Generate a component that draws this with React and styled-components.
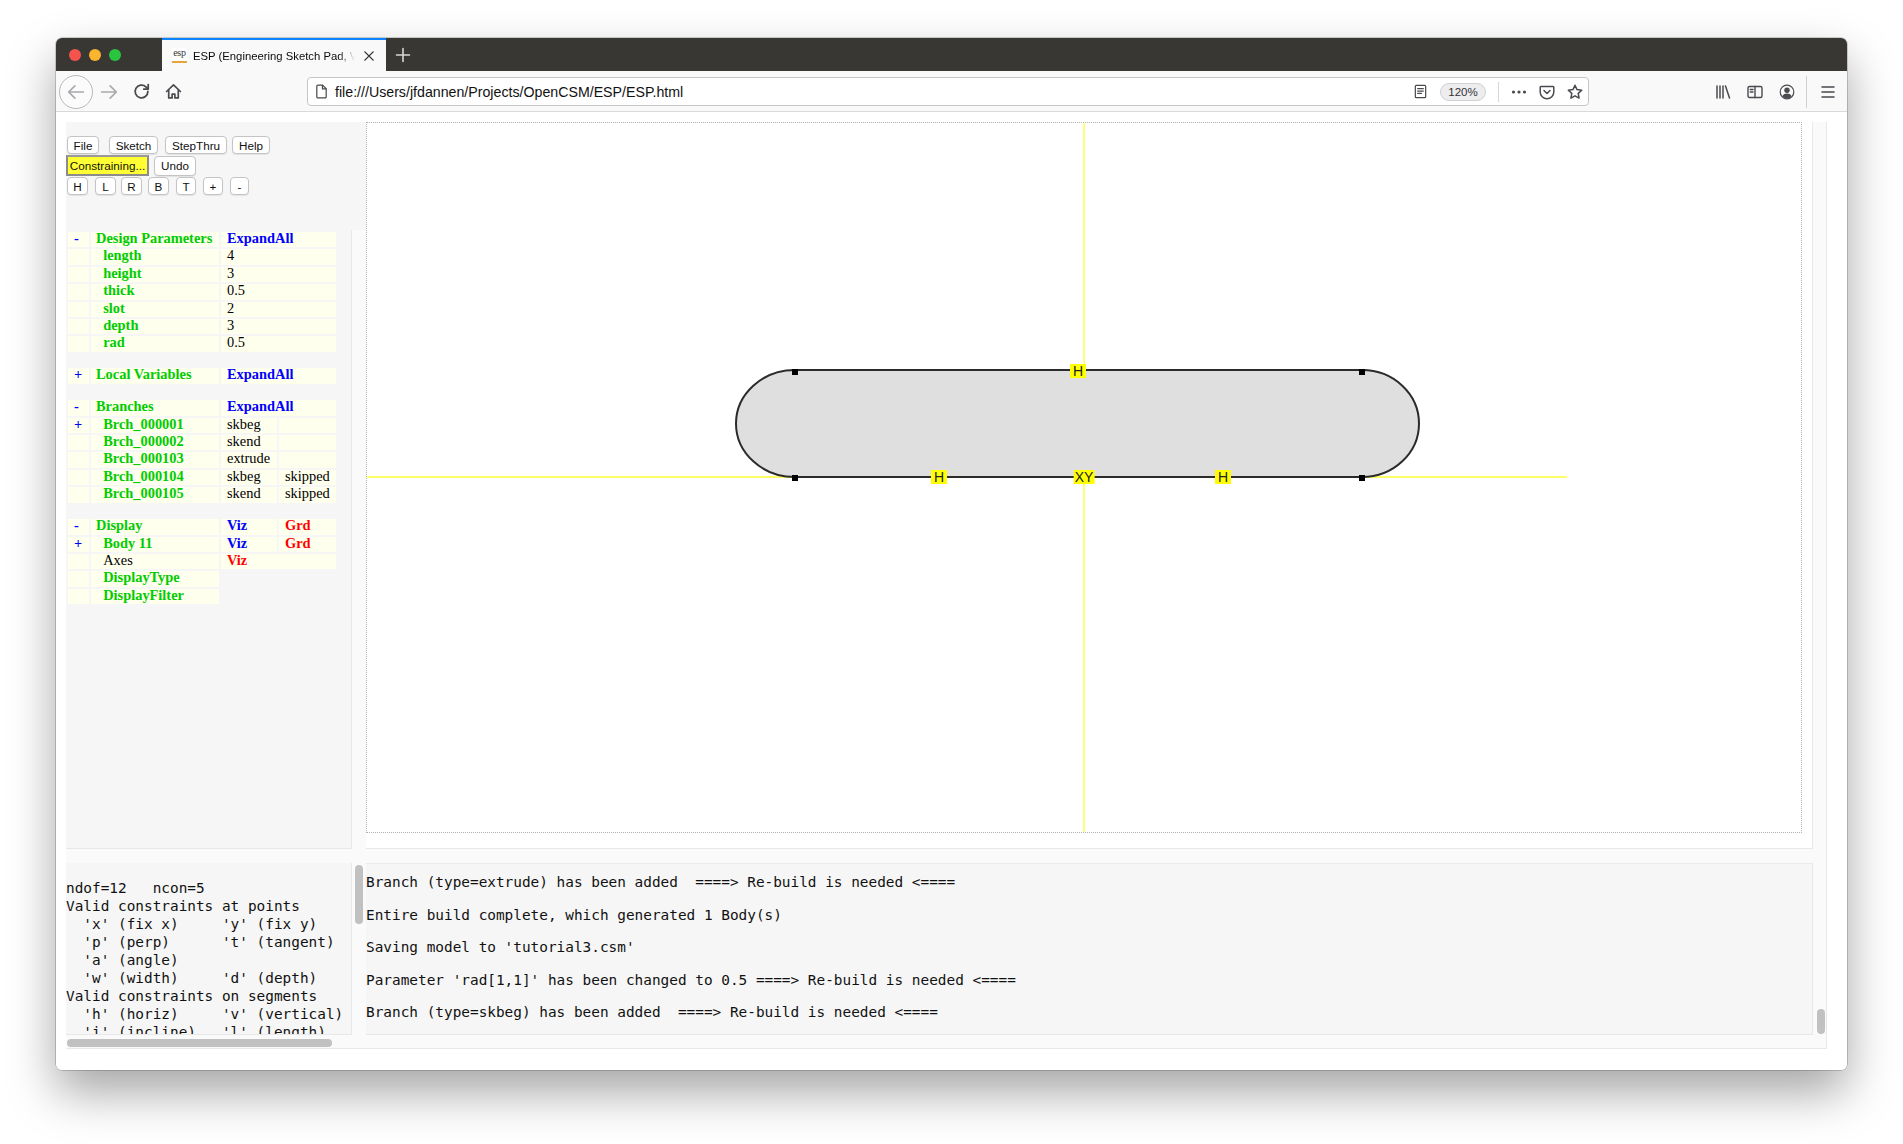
import React from "react";
import styled, { createGlobalStyle } from "styled-components";

const GlobalStyle = createGlobalStyle`
  html, body {
    margin: 0;
    padding: 0;
    background: #ffffff;
  }
  * {
    box-sizing: border-box;
  }
`;

const Page = styled.div`
  width: 1903px;
  height: 1144px;
  padding: 38px 56px 74px;
  overflow: hidden;
  font-family: "Liberation Sans", Arial, sans-serif;
`;

const Window = styled.div`
  width: 1791px;
  height: 1032px;
  background: #ffffff;
  border-radius: 6px;
  overflow: hidden;
  box-shadow: 0 0 0 0.5px rgba(0, 0, 0, 0.35), 0 22px 48px rgba(0, 0, 0, 0.36);
  display: flex;
  flex-direction: column;
`;

const TitleBar = styled.div`
  height: 33px;
  background: #383734;
  display: flex;
  align-items: stretch;
  padding-left: 13px;
`;

const Lights = styled.div`
  display: flex;
  align-items: center;
  gap: 8px;
  margin-right: 41px;
`;

const Light = styled.span`
  width: 12px;
  height: 12px;
  border-radius: 50%;
  background: ${(p) => p.$color};
`;

const Tab = styled.div`
  width: 224px;
  background: #f9f9fa;
  border-top: 2px solid #0a84ff;
  display: flex;
  align-items: center;
  padding-left: 10px;
  color: #0c0c0d;
  font-size: 11.3px;
`;

const Favicon = styled.span`
  width: 15px;
  height: 15px;
  flex: none;
  font-size: 10px;
  line-height: 10px;
  letter-spacing: -0.2px;
  color: #333333;
  border-bottom: 2px solid #e8a33a;
  background: #ffffff;
  text-align: center;
  font-family: "Liberation Serif", serif;
`;

const TabTitle = styled.span`
  width: 162px;
  margin-left: 6px;
  white-space: nowrap;
  -webkit-mask-image: linear-gradient(to right, #000 90%, transparent);
  mask-image: linear-gradient(to right, #000 90%, transparent);
`;

const TabClose = styled.span`
  display: flex;
  margin-left: 8px;
  color: #333333;
`;

const NewTab = styled.span`
  display: flex;
  align-items: center;
  margin-left: 9px;
  color: #d7d7d7;
`;

const Toolbar = styled.div`
  height: 41px;
  background: #f9f9fa;
  border-bottom: 1px solid #d9d9dc;
  display: flex;
  align-items: center;
  padding: 1px 0 0 3px;
  color: #4a4a4f;
`;

const BackButton = styled.span`
  width: 34px;
  height: 34px;
  border-radius: 50%;
  border: 1px solid #b9b9bb;
  background: #fbfbfc;
  display: flex;
  align-items: center;
  justify-content: center;
  color: #a9a9ad;
`;

const ToolSlot = styled.span`
  width: 32px;
  height: 32px;
  flex: none;
  margin-left: ${(p) => p.$left || 0}px;
  display: flex;
  align-items: center;
  justify-content: center;
  color: ${(p) => p.$color || "#4a4a4f"};
`;

const UrlBar = styled.div`
  width: 1282px;
  height: 29px;
  margin-left: 118px;
  background: #ffffff;
  border: 1px solid #c6c6c8;
  border-radius: 4px;
  display: flex;
  align-items: center;
  padding: 0 5px 0 5px;
`;

const UrlText = styled.span`
  flex: 1;
  margin-left: 6px;
  font-size: 14.2px;
  color: #111111;
  white-space: nowrap;
`;

const UrlIcon = styled.span`
  width: 16px;
  height: 16px;
  flex: none;
  display: flex;
  align-items: center;
  justify-content: center;
  margin-left: ${(p) => p.$gap || 0}px;
`;

const ZoomPill = styled.span`
  width: 46px;
  height: 18px;
  margin-left: 12px;
  border: 1px solid #d0d0d2;
  border-radius: 9px;
  background: #ededf0;
  font-size: 11.5px;
  line-height: 16px;
  text-align: center;
  color: #333333;
`;

const UrlDivider = styled.span`
  width: 1px;
  height: 20px;
  margin-left: 12px;
  background: #d7d7db;
`;

const ToolDivider = styled.span`
  width: 1px;
  height: 32px;
  margin-left: 3px;
  background: #d0d0d3;
`;

const Workspace = styled.div`
  flex: 1;
  padding: 10px 20px 21px 10px;
  background: #ffffff;
`;

const PanelGrid = styled.div`
  height: 100%;
  display: grid;
  grid-template-columns: 300px 1447px 13px;
  grid-template-rows: 727px 14px 172px 13px;
  background: #fafafa;
  border-right: 1px solid #e8e8e8;
  border-bottom: 1px solid #e8e8e8;
`;

const LeftColumn = styled.div`
  grid-column: 1;
  grid-row: 1;
  display: flex;
  flex-direction: column;
`;

const ButtonBar = styled.div`
  height: 108px;
  flex: none;
  background: #f6f6f6;
  padding-top: 14px;
`;

const ButtonRow = styled.div`
  display: flex;
  align-items: center;
  height: ${(p) => p.$height}px;
`;

const MenuButton = styled.button`
  height: ${(p) => p.$height || 18}px;
  width: ${(p) => p.$width}px;
  margin-left: ${(p) => p.$left}px;
  padding: 0;
  font-family: "Liberation Sans", Arial, sans-serif;
  font-size: 11.7px;
  color: #111111;
  background: #ffffff;
  border: 1px solid #c4c4c4;
  border-radius: 4px;
  box-shadow: 0 1px 1px rgba(0, 0, 0, 0.08);
`;

const ActiveButton = styled.button`
  width: 83px;
  height: 21px;
  padding: 0;
  font-family: "Liberation Sans", Arial, sans-serif;
  font-size: 11.7px;
  color: #111111;
  background: #ffff33;
  border: 2px solid #8c8c8c;
  border-top-color: #9a9a9a;
`;

const TreePanel = styled.div`
  flex: 1;
  width: 286px;
  background: #f6f6f6;
  border-right: 1px solid #e8e8e8;
  border-bottom: 1px solid #e8e8e8;
`;

const TreeTable = styled.table`
  table-layout: fixed;
  width: 272px;
  border-collapse: separate;
  border-spacing: 2px;
  font-family: "Liberation Serif", "Times New Roman", serif;
  font-size: 14.4px;
  line-height: 13.4px;
`;

const Cell = styled.td`
  height: 15.4px;
  padding: 0 0 0 ${(p) => p.$pad ?? 6}px;
  vertical-align: top;
  background: #ffffee;
  color: ${(p) => p.$color || "#000000"};
  font-weight: ${(p) => (p.$color ? "bold" : "normal")};
  white-space: pre;
`;

const SpacerCell = styled.td`
  height: 12.6px;
  padding: 0;
`;

const CanvasPanel = styled.div`
  grid-column: 2;
  grid-row: 1;
  background: #ffffff;
  border-right: 1px solid #e8e8e8;
  border-bottom: 1px solid #e8e8e8;
`;

const CanvasFrame = styled.div`
  position: relative;
  width: 1436px;
  height: 711px;
  border: 1px dotted #b0b0b0;
`;

const Badge = styled.span`
  position: absolute;
  left: ${(p) => p.$x}px;
  top: ${(p) => p.$y}px;
  transform: translate(-50%, -50%);
  height: 14px;
  min-width: 16px;
  padding: 0 1px;
  background: #ffff00;
  color: #222222;
  font-size: 14px;
  line-height: 14px;
  text-align: center;
`;

const CanvasDrawing = styled.svg`
  display: block;
`;

const InfoPanel = styled.pre`
  grid-column: 1;
  grid-row: 3;
  position: relative;
  width: 286px;
  margin: 0;
  padding: 16px 0 0 0;
  background: #f6f6f6;
  border-right: 1px solid #e8e8e8;
  border-bottom: 1px solid #e8e8e8;
  overflow: hidden;
  font-family: "DejaVu Sans Mono", monospace;
  font-size: 14.4px;
  line-height: 18px;
  color: #111111;
`;

const MessagePanel = styled.div`
  grid-column: 2;
  grid-row: 3;
  background: #f6f6f6;
  border-right: 1px solid #e8e8e8;
  border-bottom: 1px solid #e8e8e8;
  border-top: 1px solid #ececec;
  padding-top: 9px;
  font-family: "DejaVu Sans Mono", monospace;
  font-size: 14.4px;
  line-height: 18px;
  color: #111111;
`;

const MessageLine = styled.p`
  margin: 0 0 14.5px;
  white-space: pre;
`;

const GutterCell = styled.div`
  grid-column: ${(p) => p.$column};
  grid-row: ${(p) => p.$row};
  position: relative;
`;

const Thumb = styled.span`
  position: absolute;
  left: ${(p) => p.$left}px;
  top: ${(p) => p.$top}px;
  width: ${(p) => p.$width}px;
  height: ${(p) => p.$height}px;
  background: #c1c1c1;
  border-radius: 5px;
`;

const params = [
  ["length", "4"],
  ["height", "3"],
  ["thick", "0.5"],
  ["slot", "2"],
  ["depth", "3"],
  ["rad", "0.5"],
];

const branches = [
  ["+", "Brch_000001", "skbeg", ""],
  ["", "Brch_000002", "skend", ""],
  ["", "Brch_000103", "extrude", ""],
  ["", "Brch_000104", "skbeg", "skipped"],
  ["", "Brch_000105", "skend", "skipped"],
];

const GREEN = "#00cc00";
const BLUE = "#0000ff";
const RED = "#ff0000";

const infoText = `ndof=12   ncon=5
Valid constraints at points
  'x' (fix x)     'y' (fix y)
  'p' (perp)      't' (tangent)
  'a' (angle)
  'w' (width)     'd' (depth)
Valid constraints on segments
  'h' (horiz)     'v' (vertical)
  'i' (incline)   'l' (length)`;

const messages = [
  "Branch (type=extrude) has been added  ====> Re-build is needed <====",
  "Entire build complete, which generated 1 Body(s)",
  "Saving model to 'tutorial3.csm'",
  "Parameter 'rad[1,1]' has been changed to 0.5 ====> Re-build is needed <====",
  "Branch (type=skbeg) has been added  ====> Re-build is needed <====",
];

const Icon = ({ size = 16, width = 1.6, children }) => (
  <svg
    width={size}
    height={size}
    viewBox="0 0 16 16"
    fill="none"
    stroke="currentColor"
    strokeWidth={width}
    strokeLinecap="round"
    strokeLinejoin="round"
  >
    {children}
  </svg>
);

const Sign = ({ children }) => (
  <Cell $pad={6} $color={BLUE}>
    {children}
  </Cell>
);

const SpacerRow = () => (
  <tr>
    <SpacerCell colSpan={4} />
  </tr>
);

const App = () => {
  return (
    <Page>
      <GlobalStyle />
      <Window>
        <TitleBar>
          <Lights>
            <Light $color="#f5544d" />
            <Light $color="#fab42d" />
            <Light $color="#29c53f" />
          </Lights>
          <Tab>
            <Favicon>esp</Favicon>
            <TabTitle>ESP (Engineering Sketch Pad, V</TabTitle>
            <TabClose>
              <Icon size={12} width={1.8}>
                <path d="M2.5 2.5l11 11M13.5 2.5l-11 11" />
              </Icon>
            </TabClose>
          </Tab>
          <NewTab>
            <Icon size={16} width={1.6}>
              <path d="M8 1.5v13M1.5 8h13" />
            </Icon>
          </NewTab>
        </TitleBar>

        <Toolbar>
          <BackButton>
            <Icon size={18} width={1.5}>
              <path d="M14.5 8h-13M7 2.5L1.5 8 7 13.5" />
            </Icon>
          </BackButton>
          <ToolSlot $color="#a9a9ad">
            <Icon size={18} width={1.5}>
              <path d="M1.5 8h13M9 2.5L14.5 8 9 13.5" />
            </Icon>
          </ToolSlot>
          <ToolSlot>
            <Icon size={17} width={1.7}>
              <path d="M14 8a6 6 0 1 1-1.9-4.4L14 5.5" />
              <path d="M14.3 1.5v4.2h-4.2" />
            </Icon>
          </ToolSlot>
          <ToolSlot>
            <Icon size={17} width={1.6}>
              <path d="M1.5 8L8 1.8 14.5 8" />
              <path d="M3.5 7v7h3.2v-3.6h2.6V14h3.2V7" />
            </Icon>
          </ToolSlot>

          <UrlBar>
            <UrlIcon>
              <Icon size={15} width={1.3}>
                <path d="M3 2.5a1.2 1.2 0 0 1 1.2-1.2h5L13 5v8.5a1.2 1.2 0 0 1-1.2 1.2H4.2A1.2 1.2 0 0 1 3 13.5z" />
                <path d="M9 1.5V5.2h4" />
              </Icon>
            </UrlIcon>
            <UrlText>file:///Users/jfdannen/Projects/OpenCSM/ESP/ESP.html</UrlText>
            <UrlIcon>
              <Icon size={15} width={1.3}>
                <rect x="2.5" y="1.5" width="11" height="13" rx="1" />
                <path d="M5 5h6M5 7.5h6M5 10h4" />
              </Icon>
            </UrlIcon>
            <ZoomPill>120%</ZoomPill>
            <UrlDivider />
            <UrlIcon $gap={12}>
              <svg width="16" height="16" viewBox="0 0 16 16" fill="currentColor">
                <circle cx="2.5" cy="8" r="1.6" />
                <circle cx="8" cy="8" r="1.6" />
                <circle cx="13.5" cy="8" r="1.6" />
              </svg>
            </UrlIcon>
            <UrlIcon $gap={12}>
              <Icon size={16} width={1.5}>
                <path d="M2 2.5h12a.8.8 0 0 1 .8.8V8A6.8 6.8 0 0 1 1.2 8V3.3a.8.8 0 0 1 .8-.8z" />
                <path d="M5 6.5l3 3 3-3" />
              </Icon>
            </UrlIcon>
            <UrlIcon $gap={12}>
              <Icon size={16} width={1.5}>
                <path d="M8 1.3l2 4.3 4.7.6-3.5 3.2.9 4.7L8 11.8l-4.1 2.3.9-4.7L1.3 6.2 6 5.6z" />
              </Icon>
            </UrlIcon>
          </UrlBar>

          <ToolSlot $left={118}>
            <Icon size={16} width={1.5}>
              <path d="M2 2v12M5 2v12M8 2v12M10.5 2l4 12" />
            </Icon>
          </ToolSlot>
          <ToolSlot>
            <Icon size={16} width={1.4}>
              <rect x="1" y="2.5" width="14" height="11" rx="1.5" />
              <path d="M8 2.5v11M3.2 5.5H6M3.2 8H6" />
            </Icon>
          </ToolSlot>
          <ToolSlot>
            <svg width="16" height="16" viewBox="0 0 16 16" fill="none">
              <circle cx="8" cy="8" r="6.8" stroke="currentColor" strokeWidth="1.2" />
              <circle cx="8" cy="6.2" r="2.7" fill="currentColor" />
              <path d="M3.3 12.2c1-2 2.8-2.7 4.7-2.7s3.7.7 4.7 2.7A6 6 0 0 1 8 14.2a6 6 0 0 1-4.7-2z" fill="currentColor" />
            </svg>
          </ToolSlot>
          <ToolDivider />
          <ToolSlot $left={5}>
            <Icon size={16} width={1.6}>
              <path d="M2 3h12M2 8h12M2 13h12" />
            </Icon>
          </ToolSlot>
        </Toolbar>

        <Workspace>
          <PanelGrid>
            <LeftColumn>
              <ButtonBar>
                <ButtonRow $height={18}>
                  <MenuButton $left={1} $width={32}>File</MenuButton>
                  <MenuButton $left={10} $width={49}>Sketch</MenuButton>
                  <MenuButton $left={7} $width={62}>StepThru</MenuButton>
                  <MenuButton $left={5} $width={38}>Help</MenuButton>
                </ButtonRow>
                <ButtonRow $height={23}>
                  <ActiveButton>Constraining...</ActiveButton>
                  <MenuButton $left={5} $width={42} $height={20}>Undo</MenuButton>
                </ButtonRow>
                <ButtonRow $height={18}>
                  <MenuButton $left={1} $width={21}>H</MenuButton>
                  <MenuButton $left={7} $width={21}>L</MenuButton>
                  <MenuButton $left={5} $width={21}>R</MenuButton>
                  <MenuButton $left={6} $width={21}>B</MenuButton>
                  <MenuButton $left={7} $width={20}>T</MenuButton>
                  <MenuButton $left={7} $width={20}>+</MenuButton>
                  <MenuButton $left={7} $width={19}>-</MenuButton>
                </ButtonRow>
              </ButtonBar>
              <TreePanel>
                <TreeTable>
                  <colgroup>
                    <col style={{ width: 21 }} />
                    <col style={{ width: 128 }} />
                    <col style={{ width: 56 }} />
                    <col style={{ width: 57 }} />
                  </colgroup>
                  <tbody>
                    <tr>
                      <Sign>-</Sign>
                      <Cell $pad={5} $color={GREEN}>Design Parameters</Cell>
                      <Cell $color={BLUE} colSpan={2}>ExpandAll</Cell>
                    </tr>
                    {params.map(([name, value]) => (
                      <tr key={name}>
                        <Cell />
                        <Cell $pad={5} $color={GREEN}>{"\u00a0\u00a0" + name}</Cell>
                        <Cell colSpan={2}>{value}</Cell>
                      </tr>
                    ))}
                    <SpacerRow />
                    <tr>
                      <Sign>+</Sign>
                      <Cell $pad={5} $color={GREEN}>Local Variables</Cell>
                      <Cell $color={BLUE} colSpan={2}>ExpandAll</Cell>
                    </tr>
                    <SpacerRow />
                    <tr>
                      <Sign>-</Sign>
                      <Cell $pad={5} $color={GREEN}>Branches</Cell>
                      <Cell $color={BLUE} colSpan={2}>ExpandAll</Cell>
                    </tr>
                    {branches.map(([sign, name, type, state]) => (
                      <tr key={name}>
                        {sign ? <Sign>{sign}</Sign> : <Cell />}
                        <Cell $pad={5} $color={GREEN}>{"\u00a0\u00a0" + name}</Cell>
                        <Cell>{type}</Cell>
                        <Cell>{state}</Cell>
                      </tr>
                    ))}
                    <SpacerRow />
                    <tr>
                      <Sign>-</Sign>
                      <Cell $pad={5} $color={GREEN}>Display</Cell>
                      <Cell $color={BLUE}>Viz</Cell>
                      <Cell $color={RED}>Grd</Cell>
                    </tr>
                    <tr>
                      <Sign>+</Sign>
                      <Cell $pad={5} $color={GREEN}>{"\u00a0\u00a0Body 11"}</Cell>
                      <Cell $color={BLUE}>Viz</Cell>
                      <Cell $color={RED}>Grd</Cell>
                    </tr>
                    <tr>
                      <Cell />
                      <Cell $pad={5}>{"\u00a0\u00a0Axes"}</Cell>
                      <Cell $color={RED} colSpan={2}>Viz</Cell>
                    </tr>
                    <tr>
                      <Cell />
                      <Cell $pad={5} $color={GREEN}>{"\u00a0\u00a0DisplayType"}</Cell>
                    </tr>
                    <tr>
                      <Cell />
                      <Cell $pad={5} $color={GREEN}>{"\u00a0\u00a0DisplayFilter"}</Cell>
                    </tr>
                  </tbody>
                </TreeTable>
              </TreePanel>
            </LeftColumn>

            <CanvasPanel>
              <CanvasFrame>
                <CanvasDrawing width="1434" height="709" viewBox="1 1 1434 709">
                  <path d="M718 0V711" stroke="#ffff55" strokeWidth="1.5" />
                  <path d="M0 355H1201" stroke="#ffff66" strokeWidth="2" />
                  <path
                    d="M429 248H996A57 53.5 0 0 1 996 355H429A59 53.5 0 0 1 429 248Z"
                    fill="#dfdfdf"
                    stroke="#2b2b2b"
                    strokeWidth="2"
                  />
                  <rect x="426" y="247" width="6" height="6" fill="#000" />
                  <rect x="426" y="353" width="6" height="6" fill="#000" />
                  <rect x="993" y="247" width="6" height="6" fill="#000" />
                  <rect x="993" y="353" width="6" height="6" fill="#000" />
                </CanvasDrawing>
                <Badge $x={711} $y={248}>H</Badge>
                <Badge $x={572} $y={354}>H</Badge>
                <Badge $x={717} $y={354}>XY</Badge>
                <Badge $x={856} $y={354}>H</Badge>
              </CanvasFrame>
            </CanvasPanel>

            <GutterCell $column={3} $row={1} />

            <InfoPanel>{infoText}</InfoPanel>
            <MessagePanel>
              {messages.map((line) => (
                <MessageLine key={line}>{line}</MessageLine>
              ))}
            </MessagePanel>

            <GutterCell $column={3} $row={3}>
              <Thumb $left={4} $top={146} $width={8} $height={25} />
            </GutterCell>
            <GutterCell $column={1} $row={4}>
              <Thumb $left={1} $top={4} $width={265} $height={8} />
            </GutterCell>
            <GutterCell $column={1} $row={3}>
              <Thumb $left={289} $top={2} $width={8} $height={59} />
            </GutterCell>
          </PanelGrid>
        </Workspace>
      </Window>
    </Page>
  );
};

export default App;
